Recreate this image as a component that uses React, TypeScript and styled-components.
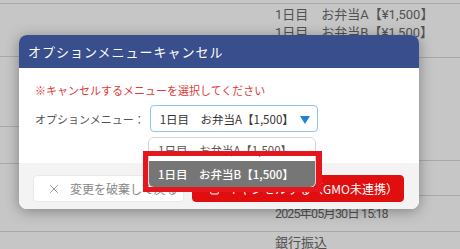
import styled, { createGlobalStyle } from "styled-components";
import { Trash2, X } from "lucide-react";

const GlobalStyle = createGlobalStyle`
  html, body {
    margin: 0;
    padding: 0;
    background: #c6c6c6;
  }
  * {
    box-sizing: border-box;
  }
  body {
    font-family: "Noto Sans CJK JP", "Noto Sans", sans-serif;
  }
`;

const Page = styled.div`
  position: relative;
  width: 460px;
  height: 249px;
  overflow: hidden;
  background: #c6c6c6;
`;

const BgTable = styled.div`
  display: grid;
  grid-template-columns: 260px 1fr;
`;

const BgCol = styled.div`
  display: flex;
  flex-direction: column;
`;

const BgRow = styled.div<{ $h: number; $top?: boolean }>`
  height: ${(p) => p.$h + 1}px;
  border-bottom: 1px solid #a9a9a9;
  padding-left: 15px;
  padding-top: ${(p) => (p.$top ? "2px" : "0")};
  display: flex;
  flex-direction: column;
  justify-content: ${(p) => (p.$top ? "flex-start" : "center")};
  flex-shrink: 0;
`;

const BgText = styled.div<{ $tight?: boolean }>`
  font-family: "Roboto", "Noto Sans CJK JP", sans-serif;
  font-size: ${(p) => (p.$tight ? "12.5px" : "13px")};
  letter-spacing: ${(p) => (p.$tight ? "-0.9px" : "0")};
  line-height: 18px;
  color: #525252;
  white-space: nowrap;
`;

const Modal = styled.div`
  position: absolute;
  left: 19px;
  top: 35px;
  width: 400px;
  border-radius: 8px;
  overflow: hidden;
  background: #fff;
  box-shadow: 0 2px 14px rgba(0, 0, 0, 0.35);
`;

const Header = styled.div`
  height: 33px;
  background: #394e8c;
  color: #fff;
  display: flex;
  align-items: center;
  padding-left: 9px;
  font-size: 13px;
  letter-spacing: 1px;
`;

const Body = styled.div`
  padding: 14px 16px 31px;
  display: flex;
  flex-direction: column;
  gap: 7px;
`;

const Notice = styled.div`
  color: #e03a3a;
  font-size: 11px;
  line-height: 16px;
`;

const FieldRow = styled.div`
  display: flex;
  align-items: center;
  gap: 5px;
`;

const Label = styled.div`
  font-size: 11px;
  color: #555;
  white-space: nowrap;
`;

const Select = styled.div`
  width: 168px;
  height: 27px;
  border: 1px solid #8ec5ea;
  border-radius: 4px;
  display: flex;
  align-items: center;
  justify-content: space-between;
  padding: 0 7px 0 9px;
  font-size: 11.5px;
  color: #333;
`;

const Arrow = styled.span`
  width: 0;
  height: 0;
  border-left: 5px solid transparent;
  border-right: 5px solid transparent;
  border-top: 8px solid #1b84d6;
  margin-top: 2px;
`;

const Footer = styled.div`
  background: #f3f3f3;
  padding: 12px 15px 7px 14px;
  display: flex;
  gap: 8px;
`;

const Button = styled.div<{ $primary?: boolean }>`
  height: 27px;
  border-radius: 4px;
  display: flex;
  align-items: center;
  font-size: 12px;
  white-space: nowrap;
  background: ${(p) => (p.$primary ? "#e00e0e" : "#fff")};
  color: ${(p) => (p.$primary ? "#fff" : "#888")};
  border: 1px solid ${(p) => (p.$primary ? "#e00e0e" : "#e8e8e8")};
  width: ${(p) => (p.$primary ? "212px" : "151px")};
  padding-left: ${(p) => (p.$primary ? "15px" : "13px")};
  gap: ${(p) => (p.$primary ? "6px" : "9px")};
`;

const Dropdown = styled.div`
  position: absolute;
  left: 148px;
  top: 137px;
  width: 168px;
  background: #fff;
  border: 1px solid #d4d4d4;
  border-radius: 6px;
  overflow: hidden;
  display: flex;
  flex-direction: column;
`;

const Option = styled.div<{ $active?: boolean }>`
  height: ${(p) => (p.$active ? "26px" : "23px")};
  display: flex;
  align-items: center;
  padding-left: 9px;
  font-size: 11.5px;
  background: ${(p) => (p.$active ? "#767676" : "#fff")};
  color: ${(p) => (p.$active ? "#fff" : "#555")};
  font-weight: ${(p) => (p.$active ? 500 : 400)};
`;

const Highlight = styled.div`
  position: absolute;
  left: 143px;
  top: 151px;
  width: 179px;
  height: 41px;
  border: 5px solid #e5161e;
  border-right-width: 6px;
  pointer-events: none;
`;

export default function App() {
  return (
    <Page>
      <GlobalStyle />
      <BgTable>
        <BgCol>
          <BgRow $h={3} />
          <BgRow $h={52} />
          <BgRow $h={69} />
          <BgRow $h={36} />
          <BgRow $h={67} />
          <BgRow $h={18} />
        </BgCol>
        <BgCol>
          <BgRow $h={3} />
          <BgRow $h={53} $top>
            <BgText>1日目　お弁当A【¥1,500】</BgText>
            <BgText>1日目　お弁当B【¥1,500】</BgText>
          </BgRow>
          <BgRow $h={102} />
          <BgRow $h={34} />
          <BgRow $h={35}>
            <BgText $tight>2025年05月30日 15:18</BgText>
          </BgRow>
          <BgRow $h={18} $top>
            <BgText>銀行振込</BgText>
          </BgRow>
        </BgCol>
      </BgTable>

      <Modal>
        <Header>オプションメニューキャンセル</Header>
        <Body>
          <Notice>※キャンセルするメニューを選択してください</Notice>
          <FieldRow>
            <Label>オプションメニュー：</Label>
            <Select>
              <span>1日目　お弁当A【1,500】</span>
              <Arrow />
            </Select>
          </FieldRow>
        </Body>
        <Footer>
          <Button>
            <X size={14} strokeWidth={1.5} color="#8a8a8a" />
            変更を破棄して戻る
          </Button>
          <Button $primary>
            <Trash2 size={13} strokeWidth={2} />
            キャンセルする（GMO未連携）
          </Button>
        </Footer>
      </Modal>

      <Dropdown>
        <Option>1日目　お弁当A【1,500】</Option>
        <Option $active>1日目　お弁当B【1,500】</Option>
      </Dropdown>
      <Highlight />
    </Page>
  );
}
